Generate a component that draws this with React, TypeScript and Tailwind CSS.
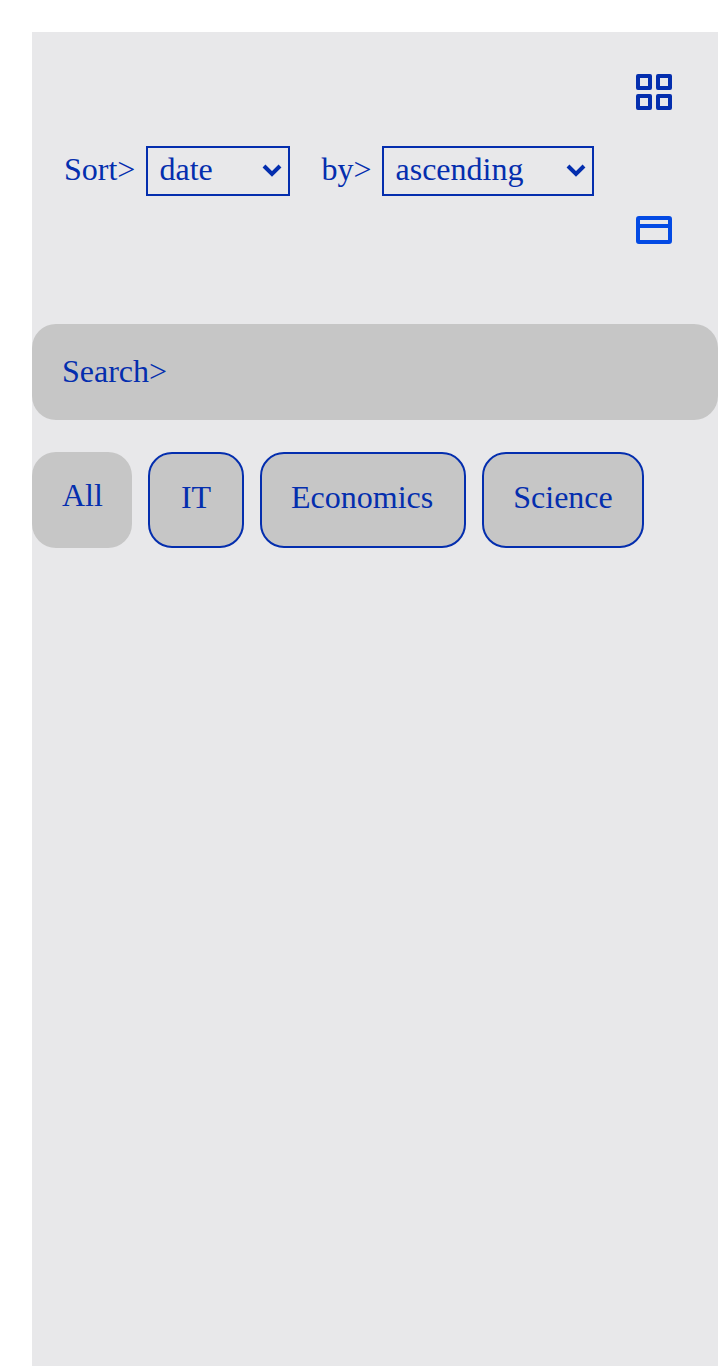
import React from "react";

function Select({ value, className }: { value: string; className: string }) {
  return (
    <button className={`flex h-[50px] items-center justify-between border-2 border-[#042eae] pl-[11.5px] pr-[6px] ${className}`}>
      <span className="-mt-[5px]">{value}</span>
      <svg className="-mt-[2px]" width="20" height="20" viewBox="0 0 20 20" fill="none" stroke="currentColor" strokeWidth="4">
        <path d="M2 6 L10 14 L18 6" />
      </svg>
    </button>
  );
}

export default function App() {
  return (
    <div className="min-h-[1366px] bg-white pl-8 pt-8 font-['Liberation_Serif',serif] text-[32px] leading-9 text-[#042eae]">
      <main className="h-[1334px] bg-[#e8e8ea]">
        <header className="flex h-[292px] justify-between pl-8 pr-[46px]">
          <div className="mt-[114px] flex h-[50px] items-center">
            <span className="-mt-[5px] w-[82px]">Sort&gt;</span>
            <Select value="date" className="w-[144px]" />
            <span className="-mt-[5px] ml-[31.5px] w-[60.5px]">by&gt;</span>
            <Select value="ascending" className="w-[212px]" />
          </div>
          <div className="flex flex-col gap-[106px] pt-[42px]">
            <svg width="36" height="36" viewBox="0 0 36 36" fill="none" stroke="currentColor" strokeWidth="4" strokeLinejoin="round">
              <path d="M2 2h12v12H2zM22 2h12v12H22zM2 22h12v12H2zM22 22h12v12H22z" />
            </svg>
            <svg width="36" height="28" viewBox="0 0 36 28" fill="#034ae4" fillRule="evenodd">
              <path d="M3 0h30a3 3 0 0 1 3 3v22a3 3 0 0 1-3 3H3a3 3 0 0 1-3-3V3a3 3 0 0 1 3-3zM4 4v4h28V4zM4 12v12h28V12z" />
            </svg>
          </div>
        </header>
        <div className="flex h-24 rounded-3xl bg-[#c6c6c6] pl-[30px] pt-[29px]">
          <span>Search&gt;</span>
        </div>
        <nav className="mt-8 flex h-24 gap-4">
          <button className="flex w-[100px] rounded-3xl bg-[#c6c6c6] pl-[30px] pt-[25px]">All</button>
          <button className="flex w-24 justify-center rounded-3xl border-2 border-[#042eae] bg-[#c6c6c6] pt-[25px]">IT</button>
          <button className="flex w-[206px] rounded-3xl border-2 border-[#042eae] bg-[#c6c6c6] pl-[29px] pt-[25px]">Economics</button>
          <button className="flex w-[162px] justify-center rounded-3xl border-2 border-[#042eae] bg-[#c6c6c6] pt-[25px]">Science</button>
        </nav>
      </main>
    </div>
  );
}
